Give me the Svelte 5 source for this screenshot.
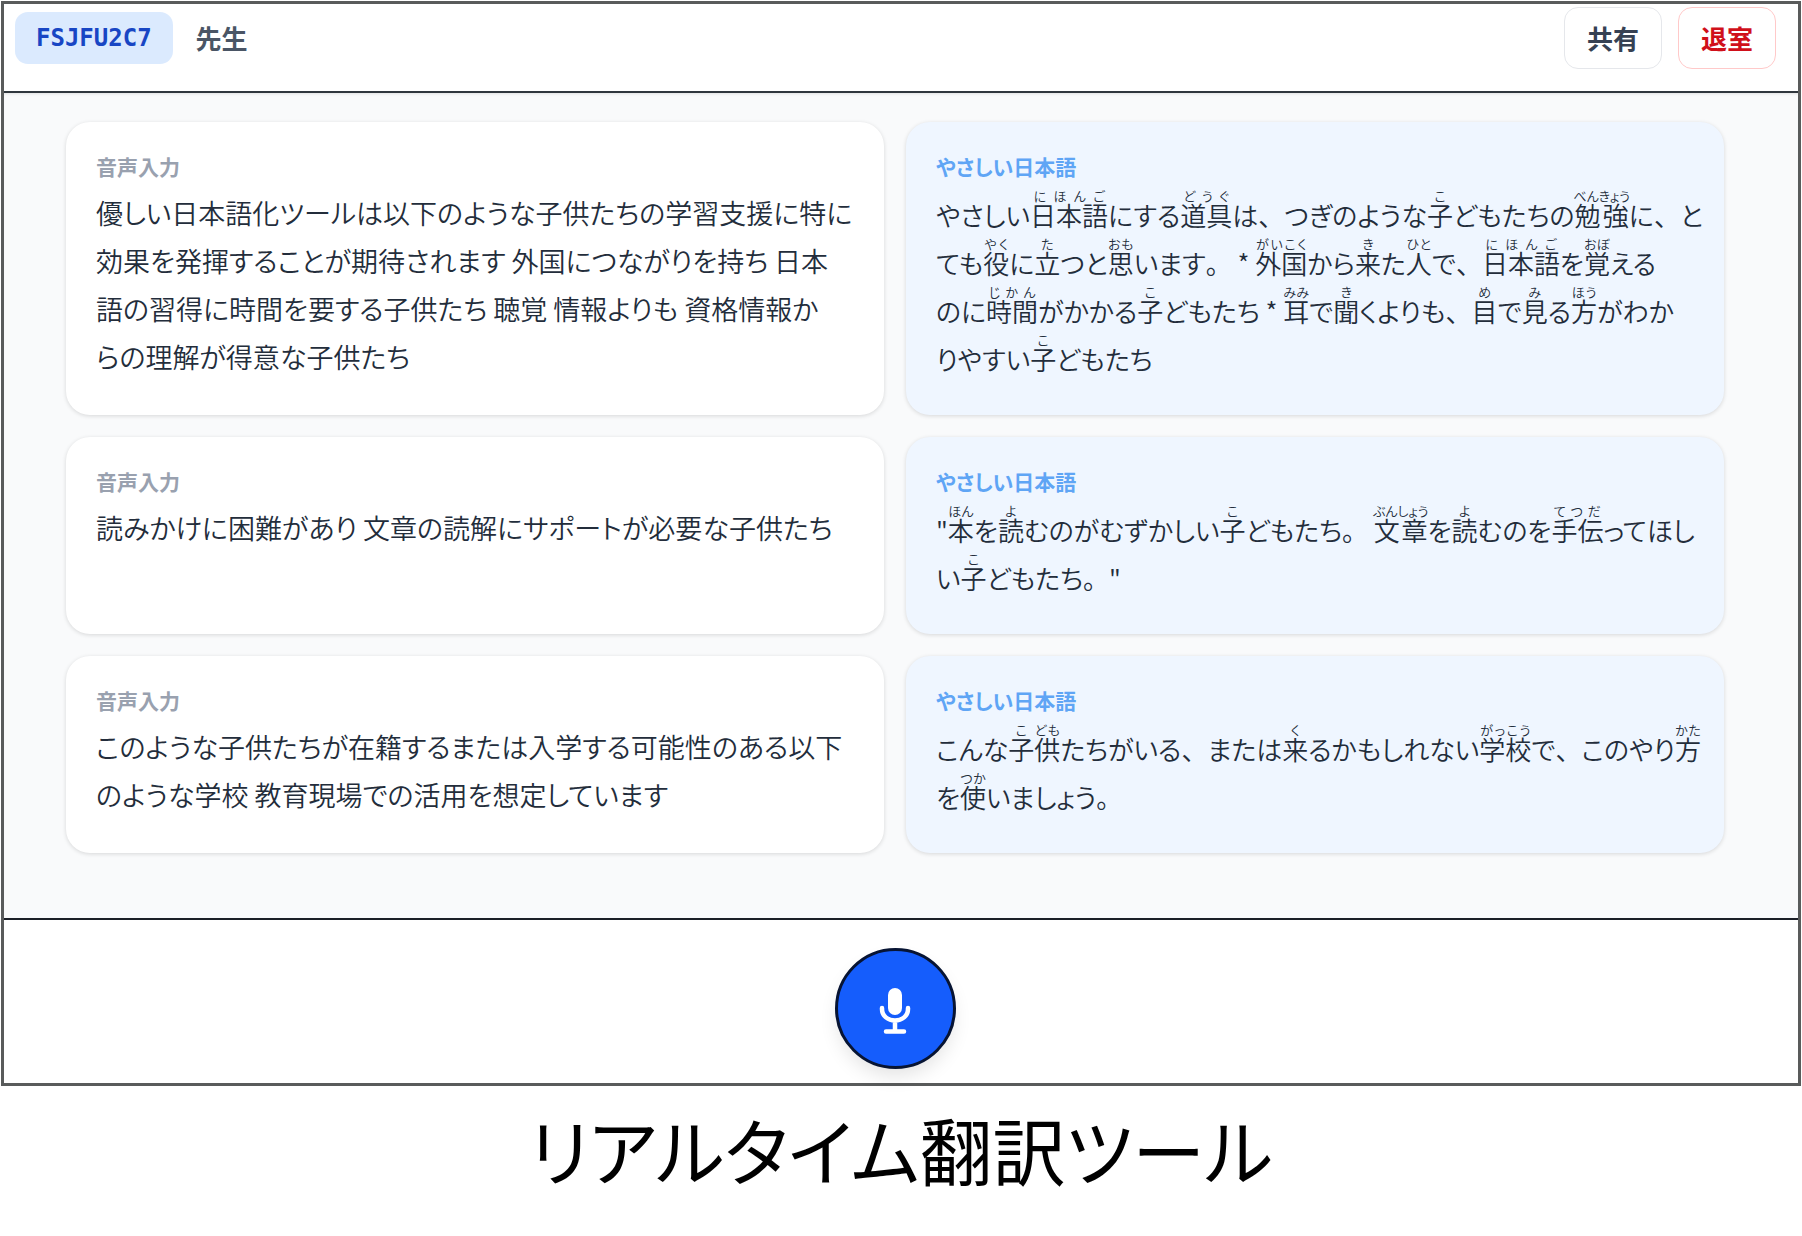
<script>
  const entries = [
    {
      source: [
        '優しい日本語化ツールは以下のような子供たちの学習支援に特に',
        '効果を発揮することが期待されます 外国につながりを持ち 日本',
        '語の習得に時間を要する子供たち 聴覚 情報よりも 資格情報か',
        'らの理解が得意な子供たち'
      ],
      easy: [
        'やさしい{日本語|にほんご}にする{道具|どうぐ}は、つぎのような{子|こ}どもたちの{勉強|べんきょう}に、と',
        'ても{役|やく}に{立|た}つと{思|おも}います。 * {外国|がいこく}から{来|き}た{人|ひと}で、{日本語|にほんご}を{覚|おぼ}える',
        'のに{時間|じかん}がかかる{子|こ}どもたち * {耳|みみ}で{聞|き}くよりも、{目|め}で{見|み}る{方|ほう}がわか',
        'りやすい{子|こ}どもたち'
      ]
    },
    {
      source: ['読みかけに困難があり 文章の読解にサポートが必要な子供たち'],
      easy: [
        '"{本|ほん}を{読|よ}むのがむずかしい{子|こ}どもたち。 {文章|ぶんしょう}を{読|よ}むのを{手伝|てつだ}ってほし',
        'い{子|こ}どもたち。"'
      ]
    },
    {
      source: [
        'このような子供たちが在籍するまたは入学する可能性のある以下',
        'のような学校 教育現場での活用を想定しています'
      ],
      easy: [
        'こんな{子|こ}{供|ども}たちがいる、または{来|く}るかもしれない{学校|がっこう}で、このやり{方|かた}',
        'を{使|つか}いましょう。'
      ]
    }
  ];

  // Splits "{base|reading}" markup into plain, punctuation and annotated segments.
  function parse(line) {
    return line
      .split(/(\{[^}]+\}|[、。])/)
      .filter(Boolean)
      .map((part) => {
        if (part === '、' || part === '。') return { base: part, mark: true };
        if (!part.startsWith('{')) return { base: part };
        const [base, reading] = part.slice(1, -1).split('|');
        return { base, reading };
      });
  }
</script>

<div class="frame">
  <header>
    <span class="code">FSJFU2C7</span>
    <span class="role">先生</span>
    <div class="actions">
      <button type="button">共有</button>
      <button type="button" class="leave">退室</button>
    </div>
  </header>

  <main>
    {#each entries as entry}
      <section class="card">
        <h2>音声入力</h2>
        <p>
          {#each entry.source as line}<span class="line">{line}</span>{/each}
        </p>
      </section>
      <section class="card easy">
        <h2>やさしい日本語</h2>
        <p>
          {#each entry.easy as line}<span class="line">{#each parse(line) as seg}{#if seg.reading}<ruby>{seg.base}<rt>{seg.reading}</rt></ruby>{:else if seg.mark}<span class="mark">{seg.base}</span>{:else}{seg.base}{/if}{/each}</span>{/each}
        </p>
      </section>
    {/each}
  </main>

  <footer>
    <button type="button" class="mic" aria-label="録音">
      <svg viewBox="0 0 32 48" width="32" height="48" aria-hidden="true">
        <rect x="9" y="1" width="14" height="27" rx="7" fill="#fff" />
        <path d="M3 21v1c0 7 6 11.500 13 11.500s13-4.500 13-11.500v-1M16 34v10M7 44.500h18" fill="none" stroke="#fff" stroke-width="4.500" stroke-linecap="round" />
      </svg>
    </button>
  </footer>
</div>
<h1>リアルタイム翻訳ツール</h1>

<style>
  :global(body) {
    margin: 0;
    background: #fff;
    font-family: 'Noto Sans CJK JP', sans-serif;
  }
  .frame {
    box-sizing: border-box;
    margin: 1px 1px 0 1px;
    border: 3px solid #595b5b;
    color: #232d3b;
  }
  header {
    display: flex;
    align-items: center;
    gap: 23px;
    padding: 3px 22px 22px 11px;
    border-bottom: 2px solid #2f363d;
    background: #fff;
  }
  .code {
    padding: 10px 21px;
    border-radius: 13px;
    background: #dbeafe;
    color: #1846c4;
    font: 700 24px/32px 'DejaVu Sans Mono', monospace;
  }
  .role {
    color: #4a5565;
    font-size: 26px;
    font-weight: 700;
    line-height: 32px;
  }
  .actions {
    display: flex;
    gap: 16px;
    margin-left: auto;
  }
  .actions button {
    padding: 14px 22px;
    border: 1px solid #e5e7eb;
    border-radius: 14px;
    background: #fff;
    color: #364153;
    font: 700 26px/32px 'Noto Sans CJK JP', sans-serif;
  }
  .actions .leave {
    border-color: #ffc9c9;
    color: #d0101a;
  }
  main {
    display: grid;
    grid-template-columns: repeat(2, minmax(0, 1fr));
    gap: 22px;
    padding: 29px 74px 65px 62px;
    background: #f9fafb;
    box-shadow: inset 0 3px 3px -2px rgb(0 0 0 / 10%);
  }
  .card {
    padding: 29px 30px 34px;
    border-radius: 24px;
    background: #fff;
    box-shadow: 0 1px 4px rgb(0 0 0 / 14%);
  }
  .easy {
    background: #eff6ff;
  }
  h2 {
    margin: 0;
    color: #99a1af;
    font-size: 21px;
    font-weight: 700;
    line-height: 30px;
    font-feature-settings: 'palt';
  }
  .easy h2 {
    color: #5fa5f5;
  }
  p {
    margin: 8px 0 0;
    font-size: 27px;
    font-weight: 350;
    line-height: 48px;
    font-feature-settings: 'palt';
  }
  .easy p {
    font-size: 26px;
  }
  .line {
    display: block;
    height: 48px;
    white-space: nowrap;
  }
  .mark {
    font-feature-settings: normal;
  }
  rt {
    font-size: 13px;
    line-height: 18px;
  }
  footer {
    display: flex;
    justify-content: center;
    padding: 28px 12px 14px 0;
    border-top: 2px solid #1b1f27;
    background: #fff;
  }
  .mic {
    display: grid;
    place-items: center;
    width: 121px;
    height: 121px;
    padding: 4px 0 0;
    border: 3px solid #071433;
    border-radius: 50%;
    background: #155dfc;
    box-shadow: 0 10px 20px -4px rgb(0 0 0 / 12%);
  }
  h1 {
    margin: 7px 0 0;
    color: #000;
    font-size: 73px;
    font-weight: 400;
    line-height: 110px;
    text-align: center;
    font-feature-settings: 'palt';
  }
</style>
